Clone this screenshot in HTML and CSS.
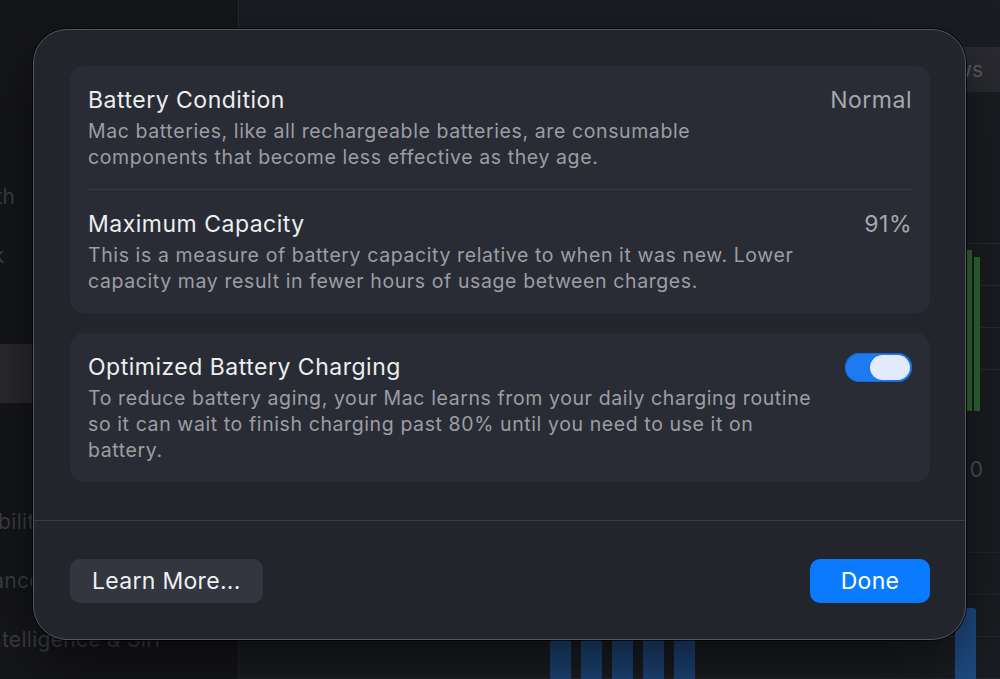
FILE: index.html
```html
<!DOCTYPE html>
<html lang="en">

    <head>
        <meta charset="UTF-8">
        <meta name="viewport" content="width=device-width, initial-scale=1.0">
        <title>Battery Health</title>
        <link rel="stylesheet" href="styles.css">
    </head>

    <body>
        <div class="window">
            <aside class="sidebar">
                <ul class="nav">
                    <li>Apple Account</li>
                    <li>Family</li>
                    <li class="group">Wi-Fi</li>
                    <li>Bluetooth</li>
                    <li>Network</li>
                    <li>VPN</li>
                    <li class="selected">Battery</li>
                    <li class="group">General</li>
                    <li>Accessibility</li>
                    <li>Appearance</li>
                    <li>Apple Intelligence &amp; Siri</li>
                </ul>
            </aside>

            <main class="content">
                <div class="toolbar">
                    <span class="segment">Windows</span>
                </div>

                <div class="chart chart-level">
                    <div class="bar bar-green" style="height: 161px"></div>
                    <div class="bar bar-green" style="height: 154px"></div>
                </div>

                <div class="axis-label">0</div>

                <div class="chart chart-usage">
                    <div class="bar bar-blue" style="height: 52px"></div>
                    <div class="bar bar-blue" style="height: 52px"></div>
                    <div class="bar bar-blue" style="height: 52px"></div>
                    <div class="bar bar-blue" style="height: 52px"></div>
                    <div class="bar bar-blue" style="height: 52px"></div>
                    <div class="bar bar-blue bar-last" style="height: 84px"></div>
                </div>
            </main>
        </div>

        <div class="sheet">
            <div class="sheet-body">
                <section class="card">
                    <div class="row">
                        <div class="row-head">
                            <span class="title">Battery Condition</span>
                            <span class="value">Normal</span>
                        </div>
                        <p class="desc">Mac batteries, like all rechargeable batteries, are consumable<br>components that become less effective as they age.</p>
                    </div>
                    <div class="row">
                        <div class="row-head">
                            <span class="title">Maximum Capacity</span>
                            <span class="value">91%</span>
                        </div>
                        <p class="desc">This is a measure of battery capacity relative to when it was new. Lower<br>capacity may result in fewer hours of usage between charges.</p>
                    </div>
                </section>

                <section class="card">
                    <div class="row">
                        <div class="row-head">
                            <span class="title">Optimized Battery Charging</span>
                            <span class="toggle on"><span class="knob"></span></span>
                        </div>
                        <p class="desc">To reduce battery aging, your Mac learns from your daily charging routine<br>so it can wait to finish charging past 80% until you need to use it on<br>battery.</p>
                    </div>
                </section>
            </div>

            <div class="sheet-footer">
                <button class="btn btn-secondary">Learn More...</button>
                <button class="btn btn-primary">Done</button>
            </div>
        </div>
    </body>

</html>
```

FILE: styles.css
```css
body {
    font-family: Inter, "Noto Sans", "Liberation Sans", sans-serif;
    background-color: #1b1d21;
    margin: 0;
    height: 100vh;
    overflow: hidden;
}

.window {
    display: flex;
    width: 1082px;
    height: 679px;
    margin-left: -82px;
    overflow: hidden;
}

/* sidebar, dimmed behind the sheet */
.sidebar {
    width: 320px;
    flex-shrink: 0;
    background: #15161a;
    border-right: 1px solid #26282d;
}

.nav {
    list-style: none;
    margin: -40px 0 0;
    padding: 0;
}

.nav li {
    height: 59px;
    line-height: 59px;
    font-size: 21px;
    letter-spacing: 0.3px;
    color: #3c3e43;
    white-space: nowrap;
}

.nav li.group {
    margin-top: 30px;
}

.nav li.selected {
    background: #2a2a2d;
    color: #4a4b4f;
}

.content {
    flex: 1;
    background: #1b1d22;
}

.toolbar {
    display: flex;
    justify-content: flex-end;
    padding-top: 47px;
}

.segment {
    height: 45px;
    line-height: 45px;
    padding: 0 17px 0 40px;
    background: #2a2b30;
    border-radius: 8px 0 0 8px;
    font-size: 21px;
    color: #5b5d62;
}

.chart {
    display: flex;
    align-items: flex-end;
}

.chart-level {
    margin-top: 151px;
    height: 168px;
    justify-content: flex-end;
    gap: 2px;
    padding-right: 20px;
    background: repeating-linear-gradient(to bottom, #2a2c31 0 1px, transparent 1px 42px);
}

.bar-green {
    width: 5px;
    background: #2e6b35;
}

.bar-green + .bar-green {
    width: 6px;
}

.axis-label {
    margin-top: 45px;
    text-align: right;
    padding-right: 17px;
    font-size: 21px;
    line-height: 28px;
    color: #4e5055;
}

.chart-usage {
    margin-top: 68px;
    height: 140px;
    gap: 10px;
    padding-left: 311px;
    padding-right: 24px;
    background: repeating-linear-gradient(to bottom, #25272c 0 1px, transparent 1px 42px);
}

.bar-blue {
    width: 21px;
    background: #1d4678;
}

.bar-last {
    margin-left: auto;
    background: #1f4d84;
    border-radius: 3px 3px 0 0;
}

/* sheet */
.sheet {
    position: absolute;
    left: 33px;
    top: 29px;
    width: 931px;
    background: #22252c;
    border: 1px solid #54575e;
    border-radius: 34px;
    box-shadow: 0 0 0 1px rgba(0, 0, 0, 0.7), 0 24px 60px rgba(0, 0, 0, 0.55);
}

.sheet-body {
    display: flex;
    flex-direction: column;
    gap: 20px;
    padding: 36px 35px 38px 36px;
}

.card {
    background: #292c34;
    border-radius: 14px;
    padding: 0 18px;
}

.row {
    padding: 21px 0 19px;
}

.row + .row {
    border-top: 1px solid #393b43;
}

.row-head {
    display: flex;
    justify-content: space-between;
    align-items: center;
    height: 26px;
}

.title {
    font-size: 23px;
    letter-spacing: 0.5px;
    line-height: 26px;
    color: #eceef1;
}

.value {
    font-size: 23px;
    letter-spacing: 0.5px;
    line-height: 26px;
    color: #a6a8ae;
}

.desc {
    margin: 5px 0 0;
    font-size: 19.5px;
    letter-spacing: 0.6px;
    line-height: 26px;
    color: #9c9ea4;
}

.toggle {
    display: flex;
    justify-content: flex-end;
    align-items: center;
    width: 63px;
    height: 25px;
    padding: 2px;
    background: #1d7af1;
    border-radius: 15px;
    box-shadow: inset 0 0 0 1px #1767d6;
}

.knob {
    width: 40px;
    height: 25px;
    border-radius: 13px;
    background: #e2eafb;
}

.sheet-footer {
    display: flex;
    justify-content: space-between;
    padding: 38px 35px 36px 36px;
    border-top: 1px solid #3a3c43;
}

.btn {
    height: 44px;
    border: none;
    border-radius: 10px;
    padding: 0 22px;
    font-family: inherit;
    font-size: 23px;
    letter-spacing: 0.3px;
    cursor: pointer;
}

.btn-secondary {
    background: #33363e;
    color: #eef0f3;
}

.btn-primary {
    width: 120px;
    background: #0a7bff;
    color: #fff;
}
```
